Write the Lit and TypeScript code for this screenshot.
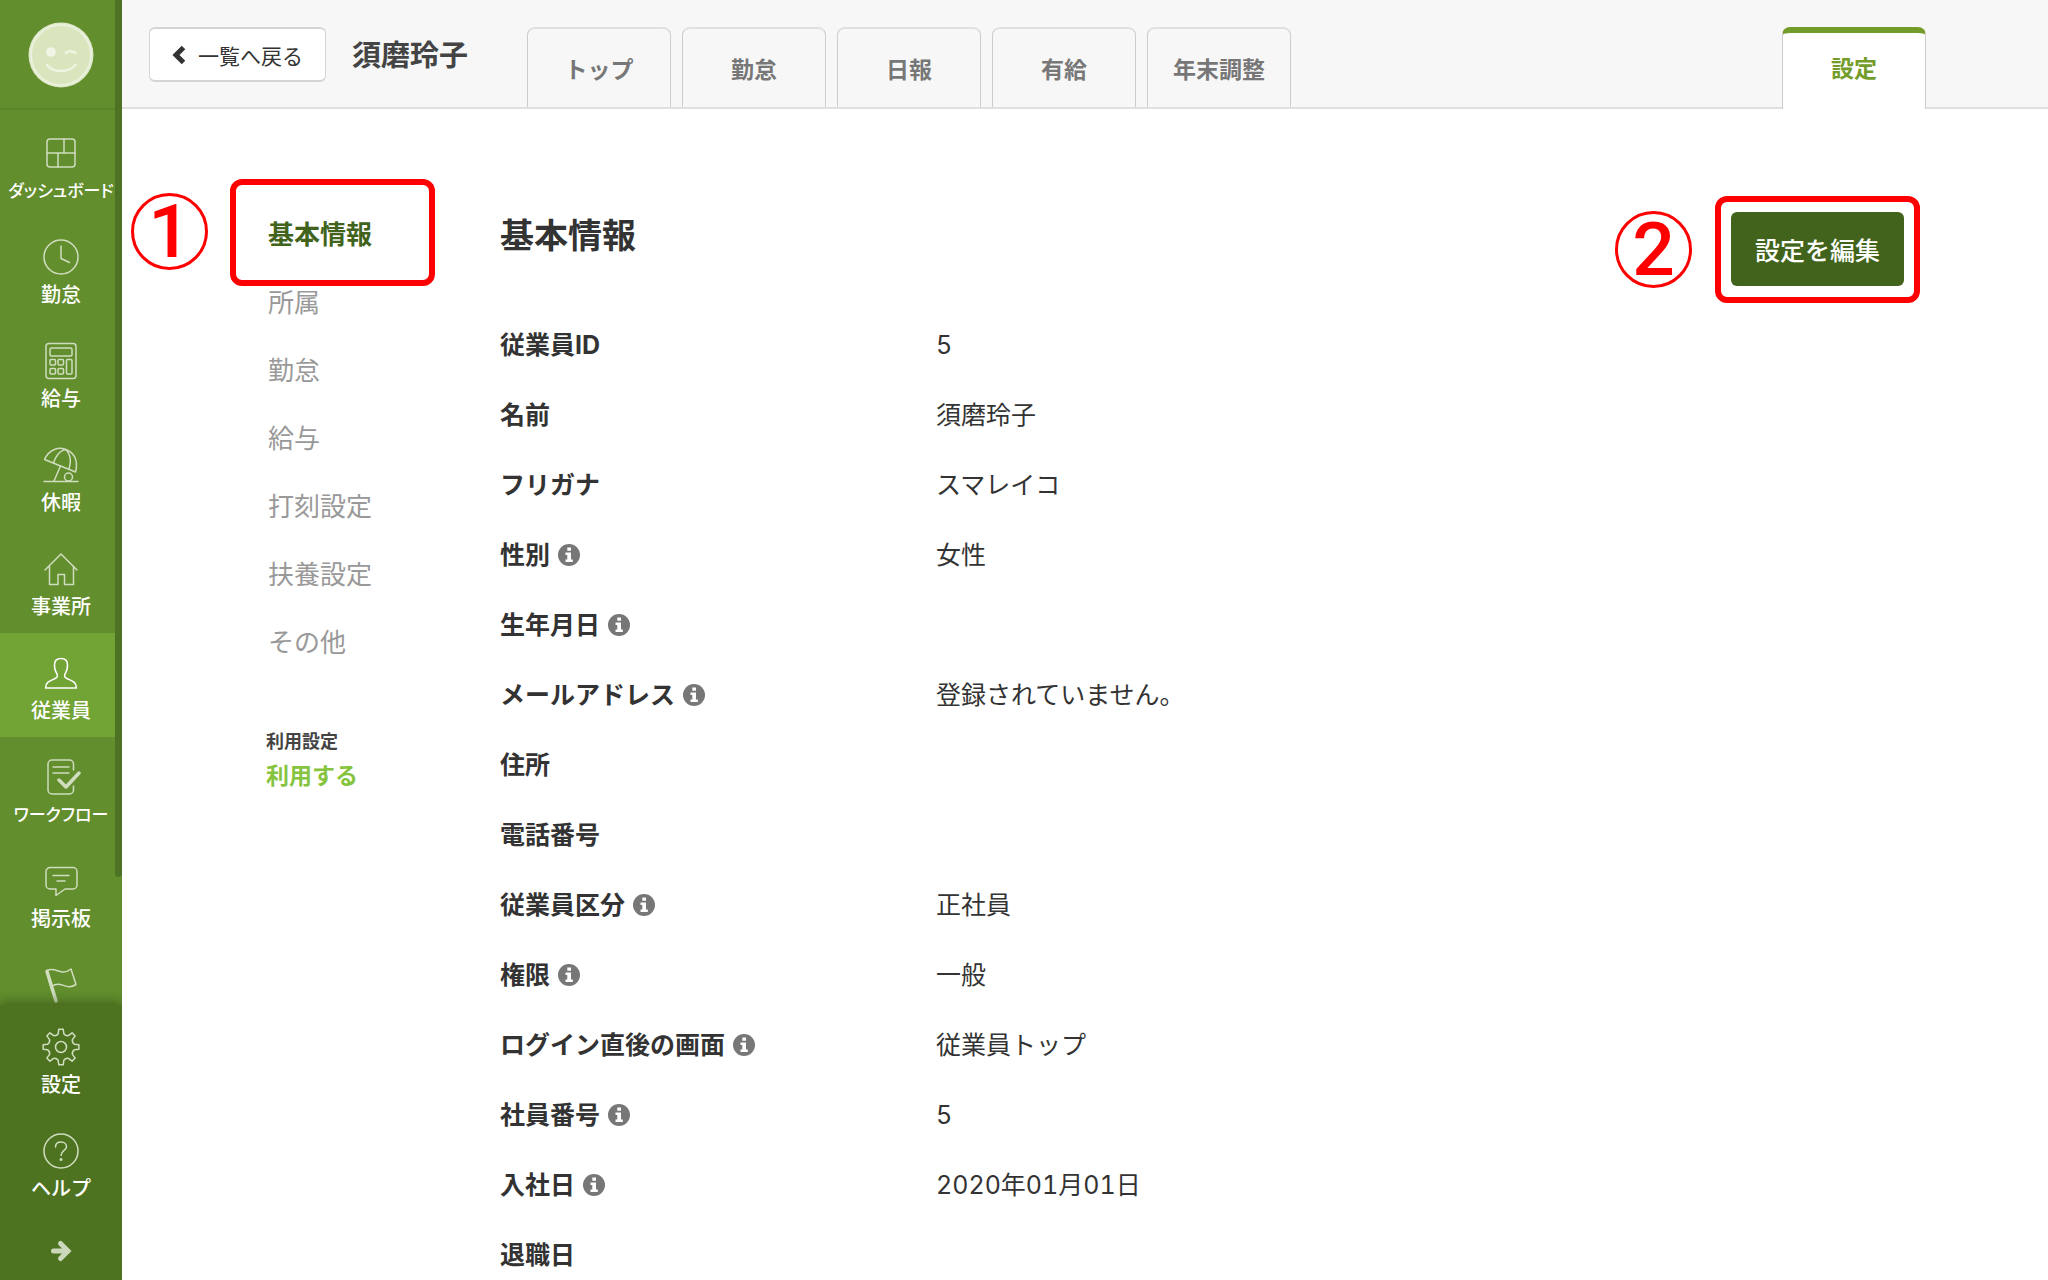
import { LitElement, html, css, svg, nothing } from "lit";
import { customElement, property } from "lit/decorators.js";
import { classMap } from "lit/directives/class-map.js";

interface NavItem {
  label: string;
  icon: string;
  active?: boolean;
  long?: boolean;
}

interface Field {
  label: string;
  value?: string;
  info?: boolean;
}

const NAV: NavItem[] = [
  { label: "ダッシュボード", icon: "dashboard", long: true },
  { label: "勤怠", icon: "clock" },
  { label: "給与", icon: "calculator" },
  { label: "休暇", icon: "parasol" },
  { label: "事業所", icon: "home" },
  { label: "従業員", icon: "person", active: true },
  { label: "ワークフロー", icon: "workflow", long: true },
  { label: "掲示板", icon: "board" },
  { label: "", icon: "flag" },
];

const FOOT: NavItem[] = [
  { label: "設定", icon: "gear" },
  { label: "ヘルプ", icon: "help" },
];

const TABS = ["トップ", "勤怠", "日報", "有給", "年末調整"];

const SECTIONS = ["基本情報", "所属", "勤怠", "給与", "打刻設定", "扶養設定", "その他"];

const FIELDS: Field[] = [
  { label: "従業員ID", value: "5" },
  { label: "名前", value: "須磨玲子" },
  { label: "フリガナ", value: "スマレイコ" },
  { label: "性別", value: "女性", info: true },
  { label: "生年月日", info: true },
  { label: "メールアドレス", value: "登録されていません。", info: true },
  { label: "住所" },
  { label: "電話番号" },
  { label: "従業員区分", value: "正社員", info: true },
  { label: "権限", value: "一般", info: true },
  { label: "ログイン直後の画面", value: "従業員トップ", info: true },
  { label: "社員番号", value: "5", info: true },
  { label: "入社日", value: "2020年01月01日", info: true },
  { label: "退職日" },
];

// Outline of an eight-toothed gear centred on (20, 20).
function gearPath(): string {
  const points: string[] = [];
  for (let tooth = 0; tooth < 8; tooth++) {
    const base = tooth * 45 - 90;
    const at = (deg: number, r: number) => {
      const a = ((base + deg) * Math.PI) / 180;
      return `${(20 + r * Math.cos(a)).toFixed(2)} ${(20 + r * Math.sin(a)).toFixed(2)}`;
    };
    points.push(
      `${tooth === 0 ? "M" : "L"}${at(-12, 13.6)}`,
      `L${at(-7, 18)}`,
      `L${at(7, 18)}`,
      `L${at(12, 13.6)}`,
      `Q${at(22.5, 11.8)} ${at(33, 13.6)}`,
    );
  }
  return points.join("") + "Z";
}

const ICONS: Record<string, unknown> = {
  dashboard: svg`<rect x="6" y="6" width="28" height="28" rx="3"/><path d="M6 20H34M23 6V20M17 20V34"/>`,
  clock: svg`<circle cx="20" cy="20" r="17"/><path d="M20 9V21.5L28.5 25.5"/>`,
  calculator: svg`<rect x="5" y="2.5" width="30" height="35" rx="3"/><rect x="9" y="7" width="22" height="8" rx="1.5"/><rect x="9" y="18.5" width="5.5" height="5.5" rx="1"/><rect x="17" y="18.5" width="5.5" height="5.5" rx="1"/><rect x="9" y="27.5" width="5.5" height="5.5" rx="1"/><rect x="17" y="27.5" width="5.5" height="5.5" rx="1"/><rect x="25.5" y="18.5" width="5.5" height="14.5" rx="1"/>`,
  parasol: svg`<path d="M3.5 14.5C8 4.5 18 1 26 5C35 9 37 18 34.5 27Z"/><path d="M25 4.5C19 5 14 12 12.5 18M25 4.5C30 10 30 18 28 24M19.5 21L13 36M3 36.5H37"/><circle cx="27.5" cy="32" r="4"/>`,
  home: svg`<path d="M4 21L20 5L36 21M8.5 17V35.5H17V25.5H23.5V35.5H32.5V17"/>`,
  person: svg`<path d="M4.5 35C4.5 28 11 27.5 15 25C17 24 16.5 21.5 15.5 20C14 18 13.5 15 13.5 12C13.5 8 16 5.5 20 5.5S26.500 8 26.500 12C26.500 15 26 18 24.500 20C23.500 21.500 23 24 25 25C29 27.500 35.500 28 35.500 35Z"/>`,
  workflow: svg`<path d="M32.5 13V7a4 4 0 0 0-4-4H11a4 4 0 0 0-4 4v26a4 4 0 0 0 4 4h17.5a4 4 0 0 0 4-4v-4M12 10H28M12 16H28"/><path class="thick" d="M18 23L25 30L38 16"/>`,
  board: svg`<path d="M9 6.5H32a4 4 0 0 1 4 4V24a4 4 0 0 1-4 4H24L15 34.5V28H9a4 4 0 0 1-4-4V10.5a4 4 0 0 1 4-4ZM12 14.5H28M16 20H24"/>`,
  flag: svg`<path class="thick" d="M6 6.5L15 36"/><path d="M6 5.5C15 1 20 12 30 4L35 19.5C25 26 20 15 11 21"/>`,
  gear: svg`<path d=${gearPath()}/><circle cx="20" cy="20" r="5.5"/>`,
  help: svg`<circle cx="20" cy="20" r="17"/><path d="M14.5 16C14.5 12.5 17 11 20 11S25.500 13 25.500 15.800C25.500 19.500 20 19.500 20 24.500"/><circle class="solid" cx="20" cy="28.5" r="1.5"/>`,
};

@customElement("nav-icon")
class NavIcon extends LitElement {
  @property() name = "";

  static styles = css`
    :host { display: block; width: 40px; height: 40px; }
    .icon {
      display: block;
      width: 100%;
      height: 100%;
      fill: none;
      stroke: currentColor;
      stroke-width: 1.5;
      stroke-linejoin: round;
      stroke-linecap: round;
    }
    .thick { stroke-width: 3.5; }
    .solid { fill: currentColor; stroke: none; }
  `;

  render() {
    return html`<svg class="icon" viewBox="0 0 40 40" aria-hidden="true">${ICONS[this.name]}</svg>`;
  }
}

@customElement("side-bar")
class SideBar extends LitElement {
  static styles = css`
    :host {
      display: flex;
      flex-direction: column;
      position: relative;
      height: 100vh;
      background: #628e2d;
      color: #fff;
    }
    .profile {
      display: flex;
      justify-content: center;
      flex: none;
      padding: 22px 0 20px;
      border-bottom: 2px solid #5b852a;
    }
    .avatar { display: block; width: 66px; height: 66px; }
    .list { flex: 1; min-height: 0; overflow: hidden; padding-top: 3px; }
    .item {
      display: flex;
      flex-direction: column;
      align-items: center;
      gap: 5px;
      box-sizing: border-box;
      height: 104px;
      padding-top: 20px;
      color: #fff;
      text-decoration: none;
      white-space: nowrap;
    }
    .item.active { background: #72a335; }
    .symbol { color: #d0ddbf; }
    .active .symbol { color: #fff; }
    .text { font-size: 20px; line-height: 24px; font-weight: 500; }
    .text.long { font-size: 17px; font-feature-settings: "palt"; }
    .foot {
      flex: none;
      padding-top: 2px;
      background: #4d7320;
      box-shadow: 0 -2px 12px rgba(45, 70, 15, 0.7);
      clip-path: inset(-14px 0 0 0);
      position: relative;
    }
    .expand {
      display: flex;
      justify-content: center;
      width: 100%;
      padding: 24px 0 17px;
      border: 0;
      background: none;
      color: #cbd8b9;
    }
    .arrow { display: block; width: 24px; height: 24px; }
    .thumb {
      position: absolute;
      top: 0;
      right: 0;
      width: 7px;
      height: 68.5%;
      border-radius: 0 0 4px 4px;
      background: #4d7224;
    }
  `;

  private item(it: NavItem) {
    return html`<a
      class=${classMap({ item: true, active: !!it.active })}
      href="#"
      aria-label=${it.label || "申請"}
    >
      <nav-icon class="symbol" name=${it.icon}></nav-icon>
      ${it.label
        ? html`<span class=${classMap({ text: true, long: !!it.long })}>${it.label}</span>`
        : nothing}
    </a>`;
  }

  render() {
    return html`
      <div class="profile">
        <svg class="avatar" viewBox="0 0 66 66" aria-hidden="true">
          <circle cx="33" cy="33" r="32.5" fill="#dfe9ca" />
          <circle cx="33" cy="33" r="30" fill="#d9e6bd" stroke="#e9f0dc" stroke-width="2" />
          <circle cx="23" cy="30" r="4.8" fill="#f0f5e8" />
          <g fill="none" stroke="#eef4e4" stroke-width="2.5" stroke-linecap="round">
            <path d="M38 31C40 28.5 45 28.5 47.5 31" />
            <path d="M19 43C26 51 40 51 47.5 43" />
          </g>
        </svg>
      </div>
      <nav class="list">${NAV.map((it) => this.item(it))}</nav>
      <div class="thumb"></div>
      <div class="foot">
        ${FOOT.map((it) => this.item(it))}
        <button class="expand" type="button" aria-label="メニューを開く">
          <svg class="arrow" viewBox="0 0 24 24" aria-hidden="true">
            <path
              d="M4.5 12H19M11.5 4.5L19 12L11.5 19.5"
              fill="none"
              stroke="currentColor"
              stroke-width="5"
              stroke-linejoin="miter"
              stroke-linecap="round"
            />
          </svg>
        </button>
      </div>
    `;
  }
}

@customElement("page-header")
class PageHeader extends LitElement {
  static styles = css`
    :host {
      display: flex;
      align-items: flex-start;
      flex: none;
      height: 82px;
      padding: 27px 122px 0 27px;
      background: #f7f7f7;
      box-shadow: inset 0 -2px 0 #e0e0e0;
      white-space: nowrap;
    }
    .back {
      display: flex;
      align-items: center;
      gap: 12px;
      box-sizing: border-box;
      height: 55px;
      padding: 0 22px;
      border: 1px solid #d4d4d4;
      border-width: 2px 1px;
      border-radius: 6px;
      background: #fff;
      color: #333;
      font-size: 21px;
      line-height: 30px;
      text-decoration: none;
    }
    .chevron { display: block; width: 14px; height: 20px; }
    .name {
      width: 175px;
      margin: 0 0 0 26px;
      font-size: 29px;
      line-height: 52px;
      font-weight: 700;
      color: #444;
    }
    .tabs { display: flex; flex: 1; gap: 11px; }
    .tab {
      box-sizing: border-box;
      width: 144px;
      height: 80px;
      border: 1px solid #ccc;
      border-top: 2px solid #e0e0e0;
      border-bottom: 0;
      border-radius: 8px 8px 0 0;
      color: #777;
      font-size: 23px;
      line-height: 78px;
      font-weight: 700;
      text-align: center;
      text-decoration: none;
    }
    .tab.current {
      height: 82px;
      margin-left: auto;
      border-top: 6px solid #739c2a;
      background: #fff;
      color: #739c2a;
      line-height: 68px;
    }
  `;

  render() {
    return html`
      <a class="back" href="#">
        <svg class="chevron" viewBox="0 0 14 20" aria-hidden="true">
          <path d="M11.5 2.5L4 10L11.5 17.5" fill="none" stroke="#333" stroke-width="5" />
        </svg>
        一覧へ戻る
      </a>
      <h1 class="name">須磨玲子</h1>
      <nav class="tabs">
        ${TABS.map((t) => html`<a class="tab" href="#">${t}</a>`)}
        <a class="tab current" href="#">設定</a>
      </nav>
    `;
  }
}

@customElement("employee-settings")
class EmployeeSettings extends LitElement {
  static styles = css`
    :host {
      display: grid;
      grid-template-columns: 234px 1fr;
      flex: 1;
      min-height: 0;
      overflow: auto;
      scrollbar-width: none;
      padding: 90px 144px 0;
      color: #333;
    }
    .section {
      display: block;
      position: relative;
      padding-left: 2px;
      color: #999;
      font-size: 26px;
      line-height: 68px;
      text-decoration: none;
    }
    .section.current { color: #41631b; font-weight: 700; }
    .status {
      margin: 52px 0 0;
      color: #444;
      font-size: 18px;
      line-height: 26px;
      font-weight: 700;
    }
    .state {
      margin: 0;
      color: #86c440;
      font-size: 23px;
      line-height: 42px;
      font-weight: 700;
    }
    .detail { padding-top: 13px; }
    .head { display: flex; justify-content: space-between; align-items: flex-start; margin-bottom: 24px; }
    .title { margin: 0; font-size: 34px; line-height: 44px; font-weight: 700; }
    .action { position: relative; }
    .edit {
      display: block;
      height: 74px;
      padding: 0 24px;
      border: 0;
      border-radius: 6px;
      background: #41631b;
      color: #fff;
      font: inherit;
      font-size: 25px;
      font-weight: 500;
    }
    .fields { margin: 0; }
    .row { display: grid; grid-template-columns: 436px 1fr; font-size: 25px; line-height: 70px; }
    .term { display: flex; align-items: center; gap: 8px; font-weight: 700; }
    .value { margin: 0; }
    .latin { font-family: "Inter", "Noto Sans CJK JP", sans-serif; font-variant-numeric: tabular-nums; }
    .info { display: block; padding: 0; border: 0; background: none; }
    .glyph { display: block; width: 22px; height: 22px; }
    .frame {
      position: absolute;
      box-sizing: border-box;
      width: 205px;
      height: 107px;
      border: 6px solid #f00;
      border-radius: 12px;
      pointer-events: none;
    }
    .step {
      position: absolute;
      display: flex;
      align-items: center;
      justify-content: center;
      box-sizing: border-box;
      width: 77px;
      height: 77px;
      border: 3px solid #f00;
      border-radius: 50%;
      color: #f00;
      font-family: Roboto, "Liberation Sans", sans-serif;
      font-size: 75px;
      line-height: 75px;
      font-weight: 500;
    }
    .section .frame { left: -36px; top: -20px; }
    .section .step { left: -135px; top: -6px; }
    .action .frame { left: -16px; top: -16px; }
    .action .step { left: -116px; top: -1px; }
  `;

  private mark(step: string) {
    return html`<span class="frame"></span><span class="step">${step}</span>`;
  }

  private info(label: string) {
    return html`<button class="info" type="button" aria-label=${label + "の説明"}>
      <svg class="glyph" viewBox="0 0 22 22" aria-hidden="true">
        <circle cx="11" cy="11" r="11" fill="#777" />
        <path d="M9.3 3.5H13V6.7H9.3ZM7.5 8.5H13V15.5H14.8V18H7.5V15.5H9.3V11H7.5Z" fill="#fff" />
      </svg>
    </button>`;
  }

  render() {
    return html`
      <aside>
        <nav>
          ${SECTIONS.map(
            (s, i) => html`<a class=${classMap({ section: true, current: i === 0 })} href="#"
              >${s}${i === 0 ? this.mark("1") : nothing}</a
            >`,
          )}
        </nav>
        <p class="status">利用設定</p>
        <p class="state">利用する</p>
      </aside>
      <section class="detail">
        <div class="head">
          <h2 class="title">基本情報</h2>
          <div class="action">
            <button class="edit" type="button">設定を編集</button>
            ${this.mark("2")}
          </div>
        </div>
        <dl class="fields">
          ${FIELDS.map(
            (f) => html`<div class="row">
              <dt class="term"><span class="latin">${f.label}</span>${f.info ? this.info(f.label) : nothing}</dt>
              <dd class="value latin">${f.value ?? nothing}</dd>
            </div>`,
          )}
        </dl>
      </section>
    `;
  }
}

@customElement("app-root")
class AppRoot extends LitElement {
  static styles = css`
    :host {
      display: grid;
      grid-template-columns: 122px 1fr;
      height: 100vh;
      overflow: hidden;
      background: #fff;
      font-family: "Noto Sans CJK JP", "Noto Sans", sans-serif;
    }
    .page { display: flex; flex-direction: column; min-width: 0; min-height: 0; }
  `;

  render() {
    return html`
      <side-bar></side-bar>
      <main class="page">
        <page-header></page-header>
        <employee-settings></employee-settings>
      </main>
    `;
  }
}
